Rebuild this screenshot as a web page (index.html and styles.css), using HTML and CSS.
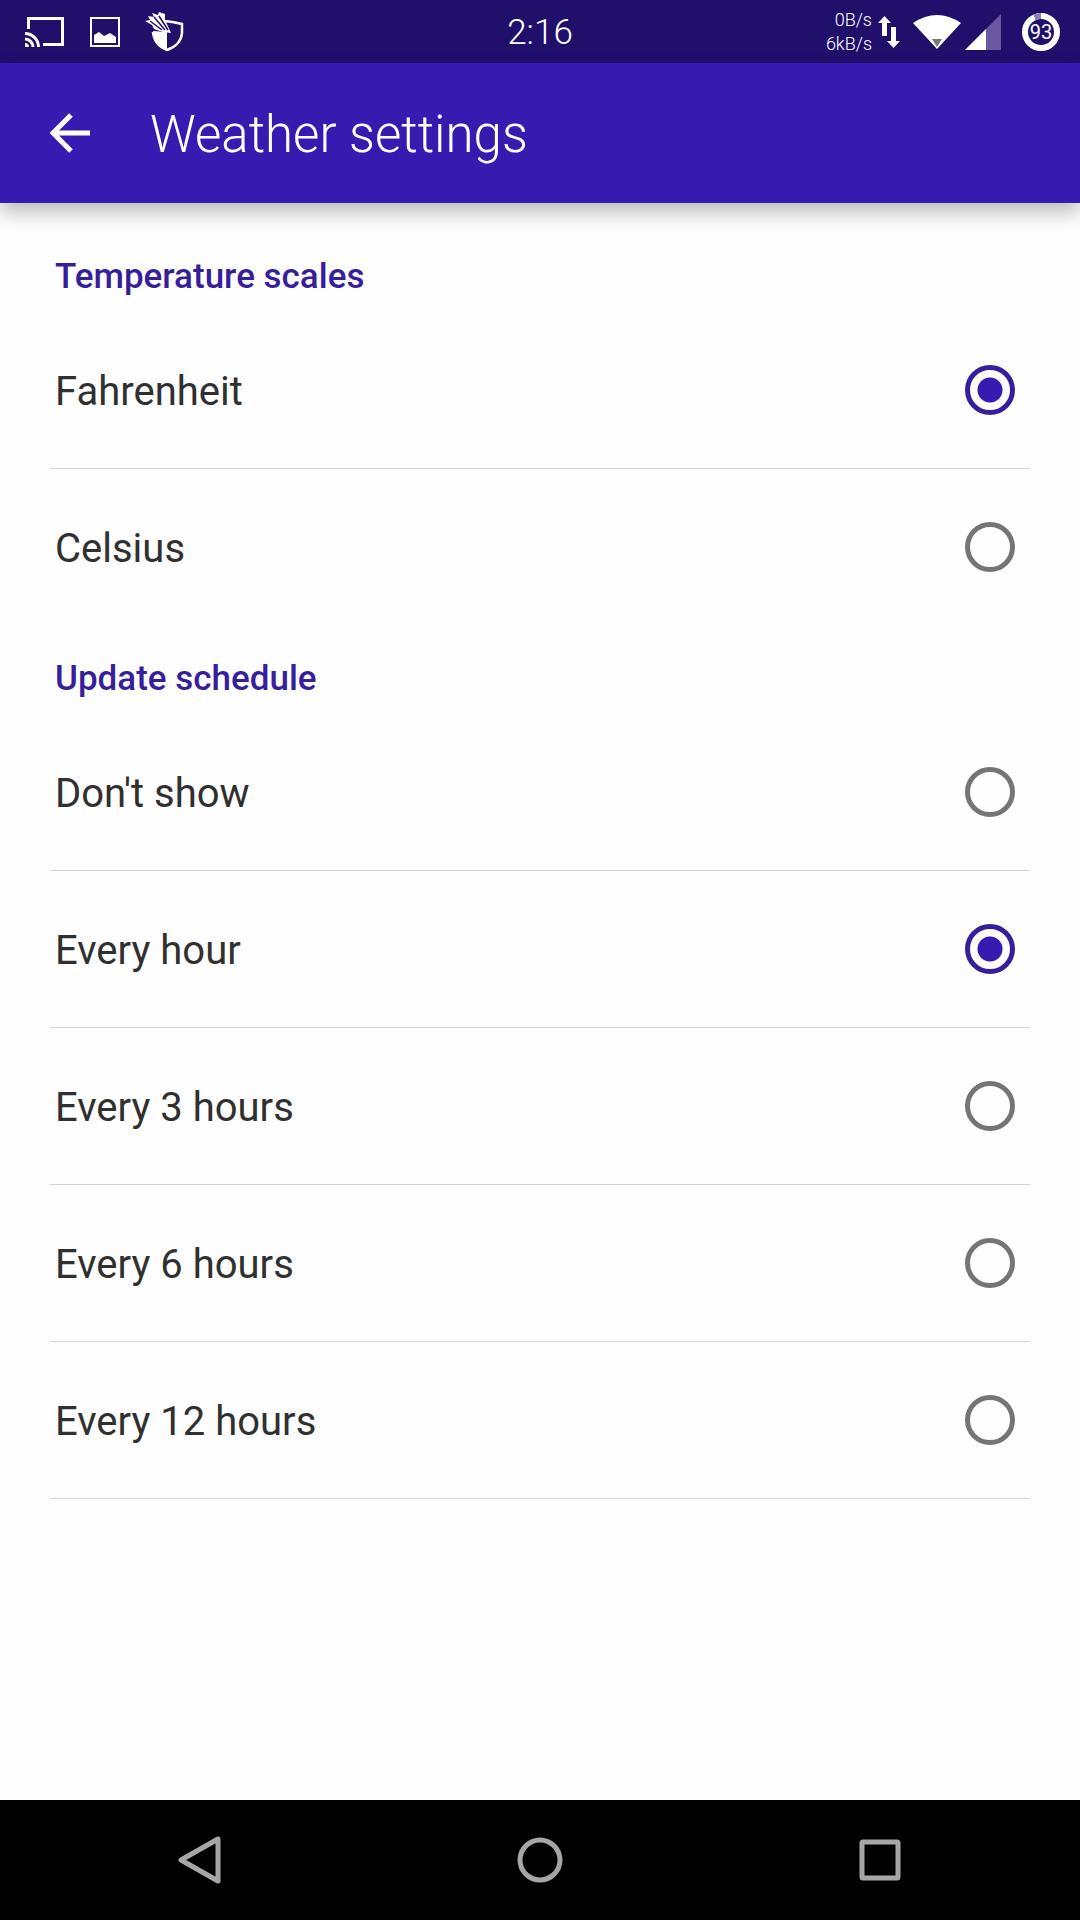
FILE: index.html
```html
<!DOCTYPE html>
<html lang="en">
<head>
  <meta charset="UTF-8">
  <meta name="viewport" content="width=device-width, initial-scale=1.0">
  <title>Weather settings</title>
  <link rel="stylesheet" href="styles.css">
</head>
<body>
  <div class="status-bar">
    <div class="status-left">
      <!-- cast -->
      <svg width="40" height="32" viewBox="0 0 40 32">
        <path d="M3.500 13V2.500H37.500V28.500H18" fill="none" stroke="#fff" stroke-width="3"/>
        <path d="M0 17.500a13.500 13.500 0 0 1 13.500 13.500M0 23a8 8 0 0 1 8 8" fill="none" stroke="#fff" stroke-width="3"/>
        <path d="M0 27a4 4 0 0 1 4 4H0z" fill="#fff"/>
      </svg>
      <!-- screenshot -->
      <svg width="30" height="30" viewBox="0 0 30 30">
        <rect x="1" y="1" width="28" height="28" fill="none" stroke="#fff" stroke-width="2"/>
        <path d="M4 26V18L9 15L14 19L20 16L26 20V26z" fill="#fff"/>
      </svg>
      <!-- shield -->
      <svg width="40" height="40" viewBox="0 0 40 40">
        <path d="M20 9Q29 10 37 12V21Q36 33 22 38Q9 33 8 20" fill="none" stroke="#fff" stroke-width="2.500"/>
        <path d="M8 19L22 20V38Q9 33 8 19z" fill="#fff"/>
        <path d="M0 9L5 8L3 4L9 5L7 1L13 3L14 0L20 2L20 8L26 21L18 20L9 17L7 13z" fill="#fff"/>
        <path d="M5 9L17 18M9 5L20 18M14 4L23 18" fill="none" stroke="#200f6b" stroke-width="1.500"/>
      </svg>
    </div>
    <time class="clock">2:16</time>
    <div class="status-right">
      <div class="net-speed">
        <span>0B/s</span>
        <span>6kB/s</span>
      </div>
      <svg class="arrows" width="22" height="32" viewBox="0 0 22 32">
        <path d="M6.500 0L13 7H9V20H4V7H0z" fill="#fff"/>
        <path d="M15.500 32L22 25H18V11H13V25H9z" fill="#fff"/>
      </svg>
      <!-- wifi -->
      <svg class="wifi" width="48" height="34" viewBox="0 0 48 34">
        <path d="M0 8Q24 -8 48 8L24 34z" fill="#fff"/>
        <path d="M19 24H29L24 32z" fill="#777"/>
      </svg>
      <!-- mobile signal -->
      <svg class="signal" width="36" height="36" viewBox="0 0 36 36">
        <path d="M36 0V36H0z" fill="#69589f"/>
        <path d="M21 15V36H0z" fill="#fff"/>
      </svg>
      <div class="battery">
        <svg width="38" height="38" viewBox="0 0 38 38">
          <circle cx="19" cy="19" r="16" fill="none" stroke="#fff" stroke-width="6"/>
          <path d="M12.500 4.400A16 16 0 0 1 19 3" fill="none" stroke="#8b7fb5" stroke-width="6"/>
        </svg>
        <span class="battery-level">93</span>
      </div>
    </div>
  </div>

  <header class="app-bar">
    <button class="back-btn" type="button" aria-label="Back">
      <svg width="40" height="40" viewBox="0 0 40 40">
        <path d="M40 20H5M21 2L3 20L21 38" fill="none" stroke="#fff" stroke-width="5"/>
      </svg>
    </button>
    <h1 class="title">Weather settings</h1>
  </header>

  <main class="settings">
    <section>
      <h2 class="section-title">Temperature scales</h2>
      <label class="option"><span>Fahrenheit</span> <input type="radio" name="scale" checked></label>
      <label class="option"><span>Celsius</span> <input type="radio" name="scale"></label>
    </section>
    <section>
      <h2 class="section-title">Update schedule</h2>
      <label class="option"><span>Don't show</span> <input type="radio" name="schedule"></label>
      <label class="option"><span>Every hour</span> <input type="radio" name="schedule" checked></label>
      <label class="option"><span>Every 3 hours</span> <input type="radio" name="schedule"></label>
      <label class="option"><span>Every 6 hours</span> <input type="radio" name="schedule"></label>
      <label class="option"><span>Every 12 hours</span> <input type="radio" name="schedule"></label>
    </section>
  </main>

  <nav class="nav-bar">
    <button type="button" aria-label="Back">
      <svg width="48" height="52" viewBox="0 0 48 52">
        <path d="M5 26L42 5V47z" fill="none" stroke="#a6a6a6" stroke-width="5" stroke-linejoin="round"/>
      </svg>
    </button>
    <button type="button" aria-label="Home">
      <svg width="48" height="48" viewBox="0 0 48 48">
        <circle cx="24" cy="24" r="20" fill="none" stroke="#a6a6a6" stroke-width="5"/>
      </svg>
    </button>
    <button type="button" aria-label="Recent apps">
      <svg width="48" height="48" viewBox="0 0 48 48">
        <rect x="6" y="6" width="36" height="36" rx="1" fill="none" stroke="#a6a6a6" stroke-width="5" stroke-linejoin="round"/>
      </svg>
    </button>
  </nav>
</body>
</html>
```

FILE: styles.css
```css
* {
  box-sizing: border-box;
}

body {
  margin: 0;
  min-height: 100vh;
  display: flex;
  flex-direction: column;
  background: #fefefe;
  font-family: Roboto, sans-serif;
  color: #303030;
}

button {
  display: flex;
  align-items: center;
  justify-content: center;
  padding: 0;
  border: none;
  background: none;
  cursor: pointer;
}

svg {
  display: block;
  flex-shrink: 0;
}

.status-bar {
  display: grid;
  grid-template-columns: 1fr auto 1fr;
  align-items: center;
  height: 63px;
  padding: 0 20px;
  background: #200f6b;
  color: #fff;
  font-weight: 300;
}

.status-left,
.status-right {
  display: flex;
  align-items: center;
}

.status-left {
  gap: 25px;
  padding-left: 5px;
}

.status-right {
  justify-content: flex-end;
}

.clock {
  padding-top: 2px;
  font-size: 35px;
  line-height: 40px;
}

.net-speed {
  display: flex;
  flex-direction: column;
  align-items: flex-end;
  font-size: 18px;
  line-height: 24px;
}

.arrows {
  margin-left: 6px;
}

.wifi {
  margin-left: 13px;
}

.signal {
  margin-left: 4px;
}

.battery {
  display: grid;
  place-items: center;
  margin-left: 21px;
}

.battery > * {
  grid-area: 1 / 1;
}

.battery-level {
  font-size: 20px;
  line-height: 24px;
  font-weight: 400;
}

.app-bar {
  display: flex;
  align-items: center;
  gap: 60px;
  height: 140px;
  padding: 0 50px;
  background: #371bb0;
  color: #fff;
  box-shadow: 0 10px 18px rgba(0, 0, 0, 0.25);
}

.title {
  margin: 0;
  padding-top: 4px;
  font-size: 51px;
  line-height: 60px;
  font-weight: 300;
}

.settings {
  flex: 1;
  padding: 21px 50px;
}

.section-title {
  margin: 0;
  padding: 18px 5px 0;
  font-size: 35px;
  line-height: 70px;
  font-weight: 500;
  color: #371f9c;
}

.option {
  display: flex;
  align-items: center;
  justify-content: space-between;
  height: 157px;
  padding: 0 15px 0 5px;
  border-bottom: 1px solid #d4d4d4;
  font-size: 40px;
  line-height: 48px;
  cursor: pointer;
}

.option span {
  padding-top: 4px;
}

section:first-child .option:last-child {
  border-bottom-color: transparent;
}

.option input {
  appearance: none;
  width: 50px;
  height: 50px;
  margin: 0;
  border: 5px solid #757575;
  border-radius: 50%;
  cursor: pointer;
}

.option input:checked {
  border-color: #371f9c;
  background: radial-gradient(circle, #371bb0 12px, transparent 13px);
}

.nav-bar {
  display: grid;
  grid-template-columns: repeat(3, 1fr);
  height: 120px;
  padding: 0 30px;
  background: #000;
}
```
